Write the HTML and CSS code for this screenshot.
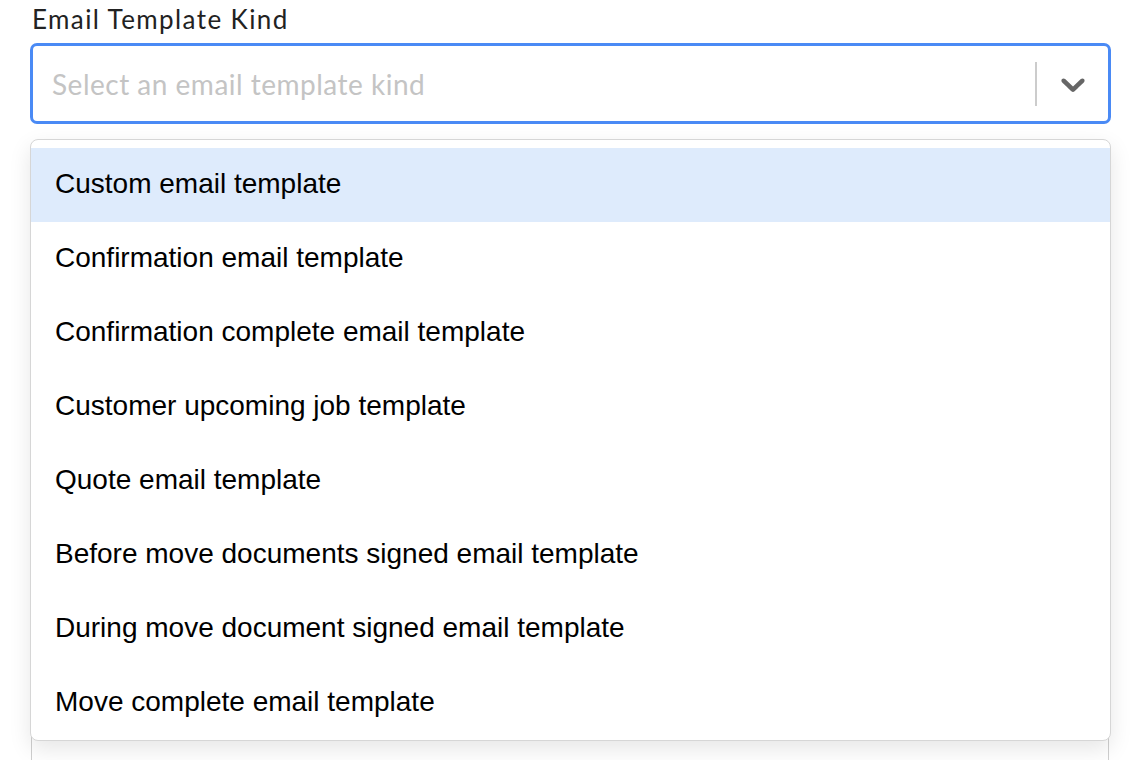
FILE: index.html
```html
<!DOCTYPE html>
<html lang="en">
<head>
<meta charset="utf-8">
<title>Email Template Kind</title>
<link rel="stylesheet" href="styles.css">
</head>
<body>
<div class="page">
  <label class="field-label">Email Template Kind</label>
  <div class="select">
    <div class="control">
      <div class="placeholder">Select an email template kind</div>
      <div class="indicators">
        <span class="separator"></span>
        <span class="chevron">
          <svg width="40" height="40" viewBox="0 0 20 20" aria-hidden="true"><path fill="#666666" d="M4.516 7.548c0.436-0.446 1.043-0.481 1.576 0l3.908 3.747 3.908-3.747c0.533-0.481 1.141-0.446 1.574 0 0.436 0.445 0.408 1.197 0 1.615-0.406 0.418-4.695 4.502-4.695 4.502-0.217 0.223-0.502 0.335-0.787 0.335s-0.57-0.112-0.789-0.335c0 0-4.287-4.084-4.695-4.502s-0.436-1.170 0-1.615z"/></svg>
        </span>
      </div>
    </div>
    <div class="menu">
      <div class="option is-focused">Custom email template</div>
      <div class="option">Confirmation email template</div>
      <div class="option">Confirmation complete email template</div>
      <div class="option">Customer upcoming job template</div>
      <div class="option">Quote email template</div>
      <div class="option">Before move documents signed email template</div>
      <div class="option">During move document signed email template</div>
      <div class="option">Move complete email template</div>
    </div>
  </div>
  <div class="next-field"></div>
</div>
</body>
</html>
```

FILE: styles.css
```css
html, body {
  margin: 0;
  padding: 0;
  background: #ffffff;
}

.page {
  padding: 0 37px 0 30px;
  display: flex;
  flex-direction: column;
}

.field-label {
  font-family: Lato, "Open Sans", sans-serif;
  font-size: 26px;
  letter-spacing: 1.4px;
  line-height: 38px;
  color: #222222;
  margin: 0 0 5px 2px;
}

.select {
  position: relative;
}

.control {
  box-sizing: border-box;
  height: 81px;
  border: 3px solid #4a8af5;
  border-radius: 7px;
  display: flex;
  align-items: center;
  background: #ffffff;
}

.placeholder {
  flex: 1;
  padding-left: 19px;
  font-family: Lato, "Open Sans", sans-serif;
  font-size: 28px;
  letter-spacing: 0.5px;
  color: #c4c4c4;
}

.indicators {
  display: flex;
  align-items: center;
  align-self: stretch;
}

.separator {
  width: 2px;
  height: 44px;
  background: #cccccc;
}

.chevron {
  display: flex;
  padding: 0 15px 0 16px;
}

.menu {
  position: absolute;
  top: calc(100% + 15px);
  left: 0;
  right: 0;
  box-sizing: border-box;
  height: 602px;
  padding-top: 8px;
  overflow: hidden;
  background: #ffffff;
  border: 1px solid #d6d6d6;
  border-radius: 8px;
  box-shadow: 0 8px 22px rgba(0, 0, 0, 0.1);
  z-index: 2;
}

.option {
  height: 74px;
  display: flex;
  align-items: center;
  padding-left: 24px;
  padding-bottom: 2px;
  box-sizing: border-box;
  font-family: "Liberation Sans", Arial, sans-serif;
  font-size: 28px;
  color: #000000;
}

.option.is-focused {
  background: #deebfc;
}

.next-field {
  margin-top: 26px;
  height: 700px;
  border: 1px solid #cfcfcf;
  border-radius: 7px;
  margin-left: 1px;
  margin-right: 2px;
}
```
